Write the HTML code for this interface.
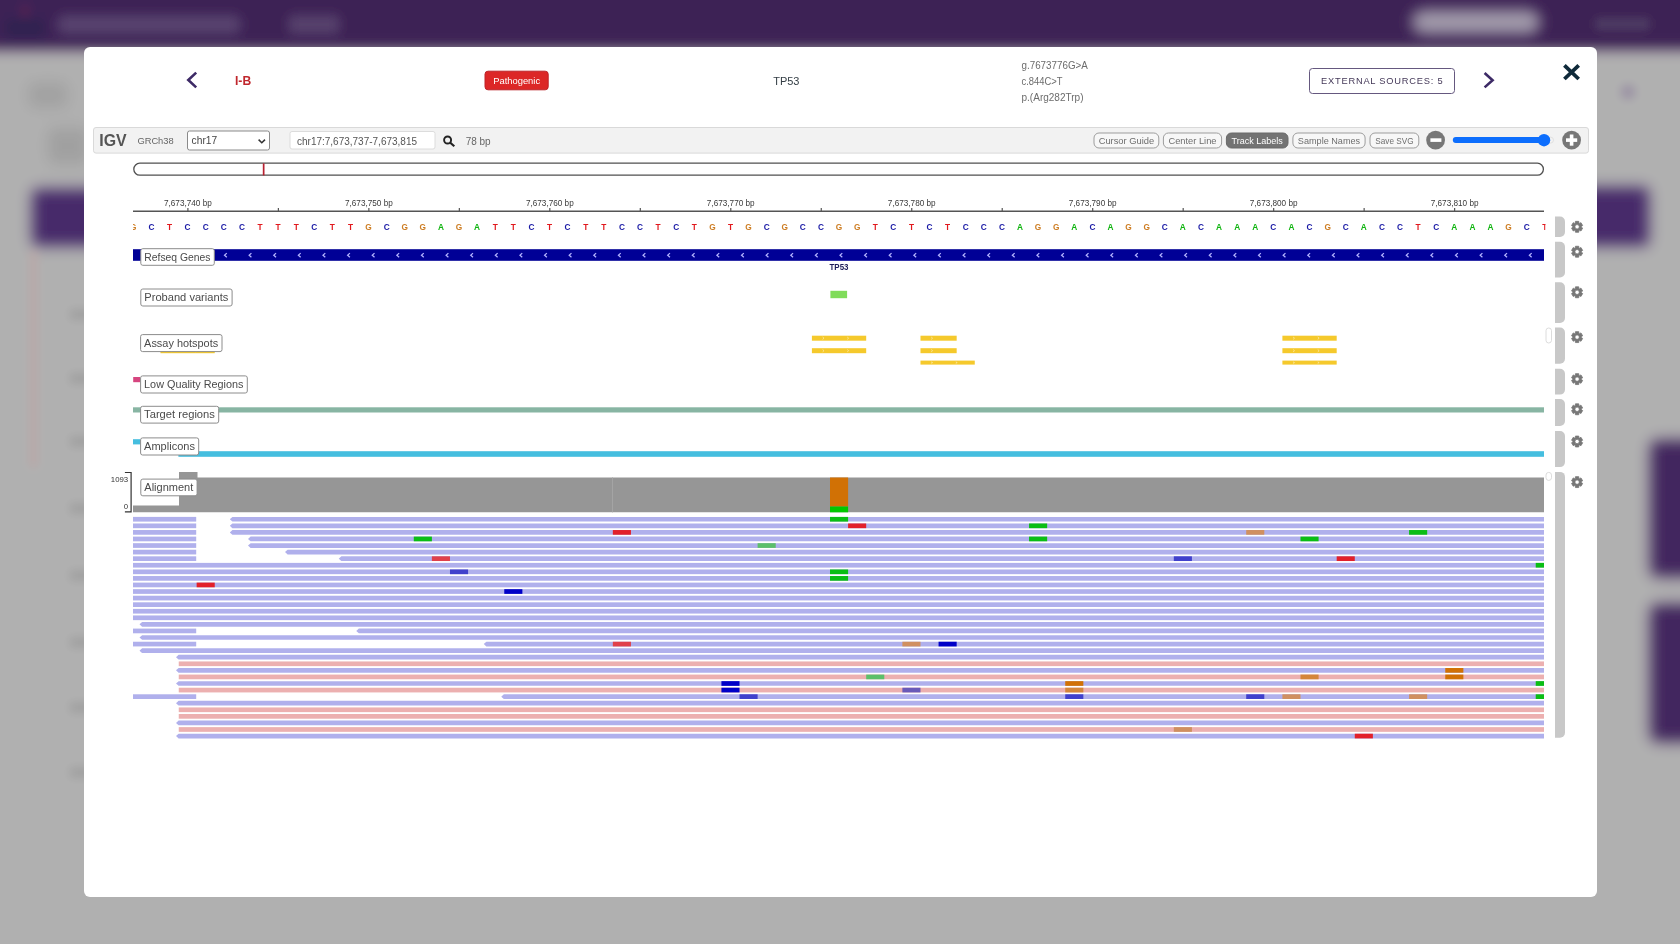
<!DOCTYPE html><html><head><meta charset="utf-8"><style>html,body{margin:0;padding:0;width:1680px;height:944px;overflow:hidden;background:#b0b0b0}svg{position:absolute;left:0;top:0}text{font-family:"Liberation Sans",sans-serif}</style></head><body>
<svg width="1680" height="944" viewBox="0 0 1680 944">
<defs><filter id="bl" x="-10%" y="-10%" width="120%" height="120%"><feGaussianBlur stdDeviation="4"/></filter><filter id="bl2" x="-50%" y="-50%" width="200%" height="200%"><feGaussianBlur stdDeviation="6"/></filter><filter id="bl3" x="-5%" y="-50%" width="110%" height="200%"><feGaussianBlur stdDeviation="5"/></filter><clipPath id="cv"><rect x="133" y="150" width="1411" height="600"/></clipPath><clipPath id="cs"><rect x="133" y="150" width="1412.5" height="600"/></clipPath><g id="gear"><path d="M-1.80,-3.69L-1.67,-5.45L1.67,-5.45L1.80,-3.69L2.29,-3.40L3.89,-4.17L5.55,-1.28L4.09,-0.29L4.09,0.29L5.55,1.28L3.89,4.17L2.29,3.40L1.80,3.69L1.67,5.45L-1.67,5.45L-1.80,3.69L-2.29,3.40L-3.89,4.17L-5.55,1.28L-4.09,0.29L-4.09,-0.29L-5.55,-1.28L-3.89,-4.17L-2.29,-3.40ZM2.20,0A2.2,2.2 0 1 0 -2.20,0A2.2,2.2 0 1 0 2.20,0Z" fill="#777" stroke="#777" stroke-width="0.8" stroke-linejoin="round" fill-rule="evenodd"/></g></defs>
<g filter="url(#bl)">
<rect x="-20" y="45" width="1720" height="920" fill="#b0b0b0"/>
<rect x="-40" y="-40" width="1760" height="90" fill="#3e2155" filter="url(#bl3)"/>
<rect x="58" y="16" width="182" height="17" rx="4" fill="#5c4672" filter="url(#bl3)"/>
<rect x="288" y="16" width="52" height="17" rx="4" fill="#5a446f" filter="url(#bl3)"/>
<rect x="5" y="20" width="40" height="16" fill="#2f2450" filter="url(#bl3)"/>
<circle cx="25" cy="11" r="5" fill="#6a2a50" filter="url(#bl3)"/>
<rect x="1412" y="10" width="128" height="24" rx="12" fill="#a29bab" filter="url(#bl2)"/>
<rect x="1595" y="18" width="55" height="12" rx="4" fill="#4e3a63"/>
<rect x="32" y="189" width="80" height="57" rx="6" fill="#46296a" filter="url(#bl2)"/>
<rect x="29" y="250" width="9" height="218" rx="4" fill="#b8a9a9"/>
<rect x="28" y="82" width="40" height="26" rx="8" fill="#a2a2a2" filter="url(#bl2)"/>
<rect x="48" y="128" width="40" height="36" rx="8" fill="#a0a0a0" filter="url(#bl2)"/>
<rect x="70" y="309" width="24" height="11" fill="#a1a1a1"/>
<rect x="70" y="373" width="24" height="11" fill="#a1a1a1"/>
<rect x="70" y="436" width="24" height="11" fill="#a1a1a1"/>
<rect x="70" y="503" width="24" height="11" fill="#a1a1a1"/>
<rect x="70" y="570" width="24" height="11" fill="#a1a1a1"/>
<rect x="70" y="637" width="24" height="11" fill="#a1a1a1"/>
<rect x="70" y="702" width="24" height="11" fill="#a1a1a1"/>
<rect x="70" y="767" width="24" height="11" fill="#a1a1a1"/>
<rect x="1570" y="187" width="79" height="59" rx="6" fill="#46296a" filter="url(#bl2)"/>
<rect x="1650" y="440" width="60" height="137" rx="8" fill="#43275e" filter="url(#bl2)"/>
<rect x="1650" y="604" width="60" height="138" rx="8" fill="#43275e" filter="url(#bl2)"/>
<circle cx="1628" cy="92" r="8" fill="#9e96a6"/>
</g>
<rect x="84" y="47" width="1513" height="850" rx="6" fill="#fff"/>
<polyline points="196.2,72.6 188.3,80 196.2,87.4" fill="none" stroke="#3d2a66" stroke-width="2.6"/>
<text x="235" y="85" font-size="12.4" font-weight="bold" fill="#c0272d" textLength="16.2" lengthAdjust="spacingAndGlyphs">I-B</text>
<rect x="485" y="71.2" width="63.2" height="18.6" rx="3" fill="#dc2727" stroke="#bd2329" stroke-width="1"/>
<text x="493.2" y="84" font-size="9.4" fill="#fff">Pathogenic</text>
<text x="773.2" y="85" font-size="11.8" fill="#333d44" textLength="26.3" lengthAdjust="spacingAndGlyphs">TP53</text>
<text x="1021.5" y="68.8" font-size="10.5" fill="#6c6c6c" textLength="66.3" lengthAdjust="spacingAndGlyphs">g.7673776G&gt;A</text>
<text x="1021.5" y="84.5" font-size="10.5" fill="#6c6c6c" textLength="41" lengthAdjust="spacingAndGlyphs">c.844C&gt;T</text>
<text x="1021.5" y="101" font-size="10.5" fill="#6c6c6c" textLength="62" lengthAdjust="spacingAndGlyphs">p.(Arg282Trp)</text>
<rect x="1309.5" y="68.5" width="145" height="25" rx="3" fill="#fff" stroke="#65587f" stroke-width="1"/>
<text x="1321" y="84.4" font-size="9.3" letter-spacing="0.78" fill="#443858">EXTERNAL SOURCES: 5</text>
<polyline points="1484.6,73 1492.6,80.2 1484.6,87.4" fill="none" stroke="#3d2a66" stroke-width="2.6"/>
<path d="M1564.4,65.3L1578.7,79M1578.7,65.3L1564.4,79" stroke="#0f2a3a" stroke-width="3.8"/>
<rect x="93.5" y="127.5" width="1495" height="25.6" rx="2.5" fill="#f2f2f2" stroke="#d9d9d9" stroke-width="1"/>
<text x="99.3" y="146.4" font-size="15.9" font-weight="bold" fill="#555">IGV</text>
<text x="137.4" y="144.4" font-size="9.9" fill="#666" textLength="36.3" lengthAdjust="spacingAndGlyphs">GRCh38</text>
<rect x="187.5" y="131" width="82" height="19" rx="2" fill="#fff" stroke="#8a8a8a" stroke-width="1"/>
<text x="191.6" y="144.4" font-size="10.3" fill="#444" textLength="25.6" lengthAdjust="spacingAndGlyphs">chr17</text>
<polyline points="258.6,139.6 261.8,142.8 265,139.6" fill="none" stroke="#333" stroke-width="1.5"/>
<rect x="290" y="131.5" width="145" height="17.5" rx="2" fill="#fff" stroke="#dcdcdc" stroke-width="1"/>
<text x="297" y="145.1" font-size="10.4" fill="#555" textLength="120" lengthAdjust="spacingAndGlyphs">chr17:7,673,737-7,673,815</text>
<circle cx="447.6" cy="140" r="3.5" fill="none" stroke="#222" stroke-width="1.9"/>
<line x1="450.3" y1="142.7" x2="454.3" y2="146.3" stroke="#222" stroke-width="2.2"/>
<text x="465.7" y="145.1" font-size="10.4" fill="#666" textLength="25" lengthAdjust="spacingAndGlyphs">78 bp</text>
<rect x="1094.0" y="133" width="64.8" height="15" rx="5" fill="#f7f7f7" stroke="#9d9d9d" stroke-width="1"/>
<text x="1126.4" y="143.7" font-size="9.33" fill="#6e6e6e" text-anchor="middle" textLength="55.5" lengthAdjust="spacingAndGlyphs">Cursor Guide</text>
<rect x="1163.4" y="133" width="58.2" height="15" rx="5" fill="#f7f7f7" stroke="#9d9d9d" stroke-width="1"/>
<text x="1192.5" y="143.7" font-size="9.29" fill="#6e6e6e" text-anchor="middle" textLength="48" lengthAdjust="spacingAndGlyphs">Center Line</text>
<rect x="1226.4" y="133" width="61.6" height="15" rx="5" fill="#737373" stroke="#6a6a6a" stroke-width="1"/>
<text x="1257.2" y="143.7" font-size="9.04" fill="#fff" text-anchor="middle" textLength="51.4" lengthAdjust="spacingAndGlyphs">Track Labels</text>
<rect x="1292.9" y="133" width="72.2" height="15" rx="5" fill="#f7f7f7" stroke="#9d9d9d" stroke-width="1"/>
<text x="1329.0" y="143.7" font-size="9.11" fill="#6e6e6e" text-anchor="middle" textLength="62.3" lengthAdjust="spacingAndGlyphs">Sample Names</text>
<rect x="1370.0" y="133" width="48.8" height="15" rx="5" fill="#f7f7f7" stroke="#9d9d9d" stroke-width="1"/>
<text x="1394.4" y="143.7" font-size="8.18" fill="#6e6e6e" text-anchor="middle" textLength="38.2" lengthAdjust="spacingAndGlyphs">Save SVG</text>
<circle cx="1435.6" cy="140.1" r="9.4" fill="#777"/>
<rect x="1430.4" y="138.3" width="11" height="3.6" fill="#fff"/>
<rect x="1452.8" y="137.1" width="95" height="6" rx="3" fill="#0d6efd"/>
<circle cx="1550.5" cy="140.1" r="3" fill="none" stroke="#ddd" stroke-width="0.8"/>
<circle cx="1544" cy="140.2" r="6.2" fill="#0d6efd"/>
<circle cx="1571.6" cy="140.1" r="9.4" fill="#777"/>
<rect x="1566" y="138.3" width="11.2" height="3.6" fill="#fff"/>
<rect x="1569.8" y="134.5" width="3.6" height="11.2" fill="#fff"/>
<rect x="133.8" y="163.2" width="1409.6" height="12" rx="6" fill="#fff" stroke="#505050" stroke-width="1.3"/>
<rect x="262.8" y="163.4" width="1.7" height="12" fill="#b82030"/>
<rect x="133" y="210.5" width="1411" height="1.5" fill="#555"/>
<rect x="187.30" y="208" width="1.2" height="3" fill="#555"/>
<text x="187.90" y="206" font-size="8.2" fill="#3a3a3a" text-anchor="middle">7,673,740 bp</text>
<rect x="277.78" y="208" width="1.2" height="3" fill="#555"/>
<rect x="368.26" y="208" width="1.2" height="3" fill="#555"/>
<text x="368.86" y="206" font-size="8.2" fill="#3a3a3a" text-anchor="middle">7,673,750 bp</text>
<rect x="458.74" y="208" width="1.2" height="3" fill="#555"/>
<rect x="549.22" y="208" width="1.2" height="3" fill="#555"/>
<text x="549.82" y="206" font-size="8.2" fill="#3a3a3a" text-anchor="middle">7,673,760 bp</text>
<rect x="639.70" y="208" width="1.2" height="3" fill="#555"/>
<rect x="730.18" y="208" width="1.2" height="3" fill="#555"/>
<text x="730.78" y="206" font-size="8.2" fill="#3a3a3a" text-anchor="middle">7,673,770 bp</text>
<rect x="820.66" y="208" width="1.2" height="3" fill="#555"/>
<rect x="911.14" y="208" width="1.2" height="3" fill="#555"/>
<text x="911.74" y="206" font-size="8.2" fill="#3a3a3a" text-anchor="middle">7,673,780 bp</text>
<rect x="1001.62" y="208" width="1.2" height="3" fill="#555"/>
<rect x="1092.10" y="208" width="1.2" height="3" fill="#555"/>
<text x="1092.70" y="206" font-size="8.2" fill="#3a3a3a" text-anchor="middle">7,673,790 bp</text>
<rect x="1182.58" y="208" width="1.2" height="3" fill="#555"/>
<rect x="1273.06" y="208" width="1.2" height="3" fill="#555"/>
<text x="1273.66" y="206" font-size="8.2" fill="#3a3a3a" text-anchor="middle">7,673,800 bp</text>
<rect x="1363.54" y="208" width="1.2" height="3" fill="#555"/>
<rect x="1454.02" y="208" width="1.2" height="3" fill="#555"/>
<text x="1454.62" y="206" font-size="8.2" fill="#3a3a3a" text-anchor="middle">7,673,810 bp</text>
<g clip-path="url(#cs)">
<text transform="translate(133.30,229.8) scale(0.84,1)" font-size="9.9" font-weight="bold" fill="rgb(205,125,35)" text-anchor="middle">G</text>
<text transform="translate(151.40,229.8) scale(0.84,1)" font-size="9.9" font-weight="bold" fill="rgb(25,25,165)" text-anchor="middle">C</text>
<text transform="translate(169.49,229.8) scale(0.84,1)" font-size="9.9" font-weight="bold" fill="rgb(225,25,30)" text-anchor="middle">T</text>
<text transform="translate(187.59,229.8) scale(0.84,1)" font-size="9.9" font-weight="bold" fill="rgb(25,25,165)" text-anchor="middle">C</text>
<text transform="translate(205.68,229.8) scale(0.84,1)" font-size="9.9" font-weight="bold" fill="rgb(25,25,165)" text-anchor="middle">C</text>
<text transform="translate(223.78,229.8) scale(0.84,1)" font-size="9.9" font-weight="bold" fill="rgb(25,25,165)" text-anchor="middle">C</text>
<text transform="translate(241.88,229.8) scale(0.84,1)" font-size="9.9" font-weight="bold" fill="rgb(25,25,165)" text-anchor="middle">C</text>
<text transform="translate(259.97,229.8) scale(0.84,1)" font-size="9.9" font-weight="bold" fill="rgb(225,25,30)" text-anchor="middle">T</text>
<text transform="translate(278.07,229.8) scale(0.84,1)" font-size="9.9" font-weight="bold" fill="rgb(225,25,30)" text-anchor="middle">T</text>
<text transform="translate(296.16,229.8) scale(0.84,1)" font-size="9.9" font-weight="bold" fill="rgb(225,25,30)" text-anchor="middle">T</text>
<text transform="translate(314.26,229.8) scale(0.84,1)" font-size="9.9" font-weight="bold" fill="rgb(25,25,165)" text-anchor="middle">C</text>
<text transform="translate(332.36,229.8) scale(0.84,1)" font-size="9.9" font-weight="bold" fill="rgb(225,25,30)" text-anchor="middle">T</text>
<text transform="translate(350.45,229.8) scale(0.84,1)" font-size="9.9" font-weight="bold" fill="rgb(225,25,30)" text-anchor="middle">T</text>
<text transform="translate(368.55,229.8) scale(0.84,1)" font-size="9.9" font-weight="bold" fill="rgb(205,125,35)" text-anchor="middle">G</text>
<text transform="translate(386.64,229.8) scale(0.84,1)" font-size="9.9" font-weight="bold" fill="rgb(25,25,165)" text-anchor="middle">C</text>
<text transform="translate(404.74,229.8) scale(0.84,1)" font-size="9.9" font-weight="bold" fill="rgb(205,125,35)" text-anchor="middle">G</text>
<text transform="translate(422.84,229.8) scale(0.84,1)" font-size="9.9" font-weight="bold" fill="rgb(205,125,35)" text-anchor="middle">G</text>
<text transform="translate(440.93,229.8) scale(0.84,1)" font-size="9.9" font-weight="bold" fill="rgb(15,180,15)" text-anchor="middle">A</text>
<text transform="translate(459.03,229.8) scale(0.84,1)" font-size="9.9" font-weight="bold" fill="rgb(205,125,35)" text-anchor="middle">G</text>
<text transform="translate(477.12,229.8) scale(0.84,1)" font-size="9.9" font-weight="bold" fill="rgb(15,180,15)" text-anchor="middle">A</text>
<text transform="translate(495.22,229.8) scale(0.84,1)" font-size="9.9" font-weight="bold" fill="rgb(225,25,30)" text-anchor="middle">T</text>
<text transform="translate(513.32,229.8) scale(0.84,1)" font-size="9.9" font-weight="bold" fill="rgb(225,25,30)" text-anchor="middle">T</text>
<text transform="translate(531.41,229.8) scale(0.84,1)" font-size="9.9" font-weight="bold" fill="rgb(25,25,165)" text-anchor="middle">C</text>
<text transform="translate(549.51,229.8) scale(0.84,1)" font-size="9.9" font-weight="bold" fill="rgb(225,25,30)" text-anchor="middle">T</text>
<text transform="translate(567.60,229.8) scale(0.84,1)" font-size="9.9" font-weight="bold" fill="rgb(25,25,165)" text-anchor="middle">C</text>
<text transform="translate(585.70,229.8) scale(0.84,1)" font-size="9.9" font-weight="bold" fill="rgb(225,25,30)" text-anchor="middle">T</text>
<text transform="translate(603.80,229.8) scale(0.84,1)" font-size="9.9" font-weight="bold" fill="rgb(225,25,30)" text-anchor="middle">T</text>
<text transform="translate(621.89,229.8) scale(0.84,1)" font-size="9.9" font-weight="bold" fill="rgb(25,25,165)" text-anchor="middle">C</text>
<text transform="translate(639.99,229.8) scale(0.84,1)" font-size="9.9" font-weight="bold" fill="rgb(25,25,165)" text-anchor="middle">C</text>
<text transform="translate(658.08,229.8) scale(0.84,1)" font-size="9.9" font-weight="bold" fill="rgb(225,25,30)" text-anchor="middle">T</text>
<text transform="translate(676.18,229.8) scale(0.84,1)" font-size="9.9" font-weight="bold" fill="rgb(25,25,165)" text-anchor="middle">C</text>
<text transform="translate(694.28,229.8) scale(0.84,1)" font-size="9.9" font-weight="bold" fill="rgb(225,25,30)" text-anchor="middle">T</text>
<text transform="translate(712.37,229.8) scale(0.84,1)" font-size="9.9" font-weight="bold" fill="rgb(205,125,35)" text-anchor="middle">G</text>
<text transform="translate(730.47,229.8) scale(0.84,1)" font-size="9.9" font-weight="bold" fill="rgb(225,25,30)" text-anchor="middle">T</text>
<text transform="translate(748.56,229.8) scale(0.84,1)" font-size="9.9" font-weight="bold" fill="rgb(205,125,35)" text-anchor="middle">G</text>
<text transform="translate(766.66,229.8) scale(0.84,1)" font-size="9.9" font-weight="bold" fill="rgb(25,25,165)" text-anchor="middle">C</text>
<text transform="translate(784.76,229.8) scale(0.84,1)" font-size="9.9" font-weight="bold" fill="rgb(205,125,35)" text-anchor="middle">G</text>
<text transform="translate(802.85,229.8) scale(0.84,1)" font-size="9.9" font-weight="bold" fill="rgb(25,25,165)" text-anchor="middle">C</text>
<text transform="translate(820.95,229.8) scale(0.84,1)" font-size="9.9" font-weight="bold" fill="rgb(25,25,165)" text-anchor="middle">C</text>
<text transform="translate(839.04,229.8) scale(0.84,1)" font-size="9.9" font-weight="bold" fill="rgb(205,125,35)" text-anchor="middle">G</text>
<text transform="translate(857.14,229.8) scale(0.84,1)" font-size="9.9" font-weight="bold" fill="rgb(205,125,35)" text-anchor="middle">G</text>
<text transform="translate(875.24,229.8) scale(0.84,1)" font-size="9.9" font-weight="bold" fill="rgb(225,25,30)" text-anchor="middle">T</text>
<text transform="translate(893.33,229.8) scale(0.84,1)" font-size="9.9" font-weight="bold" fill="rgb(25,25,165)" text-anchor="middle">C</text>
<text transform="translate(911.43,229.8) scale(0.84,1)" font-size="9.9" font-weight="bold" fill="rgb(225,25,30)" text-anchor="middle">T</text>
<text transform="translate(929.52,229.8) scale(0.84,1)" font-size="9.9" font-weight="bold" fill="rgb(25,25,165)" text-anchor="middle">C</text>
<text transform="translate(947.62,229.8) scale(0.84,1)" font-size="9.9" font-weight="bold" fill="rgb(225,25,30)" text-anchor="middle">T</text>
<text transform="translate(965.72,229.8) scale(0.84,1)" font-size="9.9" font-weight="bold" fill="rgb(25,25,165)" text-anchor="middle">C</text>
<text transform="translate(983.81,229.8) scale(0.84,1)" font-size="9.9" font-weight="bold" fill="rgb(25,25,165)" text-anchor="middle">C</text>
<text transform="translate(1001.91,229.8) scale(0.84,1)" font-size="9.9" font-weight="bold" fill="rgb(25,25,165)" text-anchor="middle">C</text>
<text transform="translate(1020.00,229.8) scale(0.84,1)" font-size="9.9" font-weight="bold" fill="rgb(15,180,15)" text-anchor="middle">A</text>
<text transform="translate(1038.10,229.8) scale(0.84,1)" font-size="9.9" font-weight="bold" fill="rgb(205,125,35)" text-anchor="middle">G</text>
<text transform="translate(1056.20,229.8) scale(0.84,1)" font-size="9.9" font-weight="bold" fill="rgb(205,125,35)" text-anchor="middle">G</text>
<text transform="translate(1074.29,229.8) scale(0.84,1)" font-size="9.9" font-weight="bold" fill="rgb(15,180,15)" text-anchor="middle">A</text>
<text transform="translate(1092.39,229.8) scale(0.84,1)" font-size="9.9" font-weight="bold" fill="rgb(25,25,165)" text-anchor="middle">C</text>
<text transform="translate(1110.48,229.8) scale(0.84,1)" font-size="9.9" font-weight="bold" fill="rgb(15,180,15)" text-anchor="middle">A</text>
<text transform="translate(1128.58,229.8) scale(0.84,1)" font-size="9.9" font-weight="bold" fill="rgb(205,125,35)" text-anchor="middle">G</text>
<text transform="translate(1146.68,229.8) scale(0.84,1)" font-size="9.9" font-weight="bold" fill="rgb(205,125,35)" text-anchor="middle">G</text>
<text transform="translate(1164.77,229.8) scale(0.84,1)" font-size="9.9" font-weight="bold" fill="rgb(25,25,165)" text-anchor="middle">C</text>
<text transform="translate(1182.87,229.8) scale(0.84,1)" font-size="9.9" font-weight="bold" fill="rgb(15,180,15)" text-anchor="middle">A</text>
<text transform="translate(1200.96,229.8) scale(0.84,1)" font-size="9.9" font-weight="bold" fill="rgb(25,25,165)" text-anchor="middle">C</text>
<text transform="translate(1219.06,229.8) scale(0.84,1)" font-size="9.9" font-weight="bold" fill="rgb(15,180,15)" text-anchor="middle">A</text>
<text transform="translate(1237.16,229.8) scale(0.84,1)" font-size="9.9" font-weight="bold" fill="rgb(15,180,15)" text-anchor="middle">A</text>
<text transform="translate(1255.25,229.8) scale(0.84,1)" font-size="9.9" font-weight="bold" fill="rgb(15,180,15)" text-anchor="middle">A</text>
<text transform="translate(1273.35,229.8) scale(0.84,1)" font-size="9.9" font-weight="bold" fill="rgb(25,25,165)" text-anchor="middle">C</text>
<text transform="translate(1291.44,229.8) scale(0.84,1)" font-size="9.9" font-weight="bold" fill="rgb(15,180,15)" text-anchor="middle">A</text>
<text transform="translate(1309.54,229.8) scale(0.84,1)" font-size="9.9" font-weight="bold" fill="rgb(25,25,165)" text-anchor="middle">C</text>
<text transform="translate(1327.64,229.8) scale(0.84,1)" font-size="9.9" font-weight="bold" fill="rgb(205,125,35)" text-anchor="middle">G</text>
<text transform="translate(1345.73,229.8) scale(0.84,1)" font-size="9.9" font-weight="bold" fill="rgb(25,25,165)" text-anchor="middle">C</text>
<text transform="translate(1363.83,229.8) scale(0.84,1)" font-size="9.9" font-weight="bold" fill="rgb(15,180,15)" text-anchor="middle">A</text>
<text transform="translate(1381.92,229.8) scale(0.84,1)" font-size="9.9" font-weight="bold" fill="rgb(25,25,165)" text-anchor="middle">C</text>
<text transform="translate(1400.02,229.8) scale(0.84,1)" font-size="9.9" font-weight="bold" fill="rgb(25,25,165)" text-anchor="middle">C</text>
<text transform="translate(1418.12,229.8) scale(0.84,1)" font-size="9.9" font-weight="bold" fill="rgb(225,25,30)" text-anchor="middle">T</text>
<text transform="translate(1436.21,229.8) scale(0.84,1)" font-size="9.9" font-weight="bold" fill="rgb(25,25,165)" text-anchor="middle">C</text>
<text transform="translate(1454.31,229.8) scale(0.84,1)" font-size="9.9" font-weight="bold" fill="rgb(15,180,15)" text-anchor="middle">A</text>
<text transform="translate(1472.40,229.8) scale(0.84,1)" font-size="9.9" font-weight="bold" fill="rgb(15,180,15)" text-anchor="middle">A</text>
<text transform="translate(1490.50,229.8) scale(0.84,1)" font-size="9.9" font-weight="bold" fill="rgb(15,180,15)" text-anchor="middle">A</text>
<text transform="translate(1508.60,229.8) scale(0.84,1)" font-size="9.9" font-weight="bold" fill="rgb(205,125,35)" text-anchor="middle">G</text>
<text transform="translate(1526.69,229.8) scale(0.84,1)" font-size="9.9" font-weight="bold" fill="rgb(25,25,165)" text-anchor="middle">C</text>
<text transform="translate(1544.79,229.8) scale(0.84,1)" font-size="9.9" font-weight="bold" fill="rgb(225,25,30)" text-anchor="middle">T</text>
</g>
<rect x="133" y="249.2" width="1411" height="11.6" fill="rgb(0,0,150)"/>
<polyline points="226.80,253.1 224.50,255.2 226.80,257.3" fill="none" stroke="#b4b4ff" stroke-width="1.25"/>
<polyline points="251.42,253.1 249.12,255.2 251.42,257.3" fill="none" stroke="#b4b4ff" stroke-width="1.25"/>
<polyline points="276.04,253.1 273.74,255.2 276.04,257.3" fill="none" stroke="#b4b4ff" stroke-width="1.25"/>
<polyline points="300.66,253.1 298.36,255.2 300.66,257.3" fill="none" stroke="#b4b4ff" stroke-width="1.25"/>
<polyline points="325.28,253.1 322.98,255.2 325.28,257.3" fill="none" stroke="#b4b4ff" stroke-width="1.25"/>
<polyline points="349.90,253.1 347.60,255.2 349.90,257.3" fill="none" stroke="#b4b4ff" stroke-width="1.25"/>
<polyline points="374.52,253.1 372.22,255.2 374.52,257.3" fill="none" stroke="#b4b4ff" stroke-width="1.25"/>
<polyline points="399.14,253.1 396.84,255.2 399.14,257.3" fill="none" stroke="#b4b4ff" stroke-width="1.25"/>
<polyline points="423.76,253.1 421.46,255.2 423.76,257.3" fill="none" stroke="#b4b4ff" stroke-width="1.25"/>
<polyline points="448.38,253.1 446.08,255.2 448.38,257.3" fill="none" stroke="#b4b4ff" stroke-width="1.25"/>
<polyline points="473.00,253.1 470.70,255.2 473.00,257.3" fill="none" stroke="#b4b4ff" stroke-width="1.25"/>
<polyline points="497.62,253.1 495.32,255.2 497.62,257.3" fill="none" stroke="#b4b4ff" stroke-width="1.25"/>
<polyline points="522.24,253.1 519.94,255.2 522.24,257.3" fill="none" stroke="#b4b4ff" stroke-width="1.25"/>
<polyline points="546.86,253.1 544.56,255.2 546.86,257.3" fill="none" stroke="#b4b4ff" stroke-width="1.25"/>
<polyline points="571.48,253.1 569.18,255.2 571.48,257.3" fill="none" stroke="#b4b4ff" stroke-width="1.25"/>
<polyline points="596.10,253.1 593.80,255.2 596.10,257.3" fill="none" stroke="#b4b4ff" stroke-width="1.25"/>
<polyline points="620.72,253.1 618.42,255.2 620.72,257.3" fill="none" stroke="#b4b4ff" stroke-width="1.25"/>
<polyline points="645.34,253.1 643.04,255.2 645.34,257.3" fill="none" stroke="#b4b4ff" stroke-width="1.25"/>
<polyline points="669.96,253.1 667.66,255.2 669.96,257.3" fill="none" stroke="#b4b4ff" stroke-width="1.25"/>
<polyline points="694.58,253.1 692.28,255.2 694.58,257.3" fill="none" stroke="#b4b4ff" stroke-width="1.25"/>
<polyline points="719.20,253.1 716.90,255.2 719.20,257.3" fill="none" stroke="#b4b4ff" stroke-width="1.25"/>
<polyline points="743.82,253.1 741.52,255.2 743.82,257.3" fill="none" stroke="#b4b4ff" stroke-width="1.25"/>
<polyline points="768.44,253.1 766.14,255.2 768.44,257.3" fill="none" stroke="#b4b4ff" stroke-width="1.25"/>
<polyline points="793.06,253.1 790.76,255.2 793.06,257.3" fill="none" stroke="#b4b4ff" stroke-width="1.25"/>
<polyline points="817.68,253.1 815.38,255.2 817.68,257.3" fill="none" stroke="#b4b4ff" stroke-width="1.25"/>
<polyline points="842.30,253.1 840.00,255.2 842.30,257.3" fill="none" stroke="#b4b4ff" stroke-width="1.25"/>
<polyline points="866.92,253.1 864.62,255.2 866.92,257.3" fill="none" stroke="#b4b4ff" stroke-width="1.25"/>
<polyline points="891.54,253.1 889.24,255.2 891.54,257.3" fill="none" stroke="#b4b4ff" stroke-width="1.25"/>
<polyline points="916.16,253.1 913.86,255.2 916.16,257.3" fill="none" stroke="#b4b4ff" stroke-width="1.25"/>
<polyline points="940.78,253.1 938.48,255.2 940.78,257.3" fill="none" stroke="#b4b4ff" stroke-width="1.25"/>
<polyline points="965.40,253.1 963.10,255.2 965.40,257.3" fill="none" stroke="#b4b4ff" stroke-width="1.25"/>
<polyline points="990.02,253.1 987.72,255.2 990.02,257.3" fill="none" stroke="#b4b4ff" stroke-width="1.25"/>
<polyline points="1014.64,253.1 1012.34,255.2 1014.64,257.3" fill="none" stroke="#b4b4ff" stroke-width="1.25"/>
<polyline points="1039.26,253.1 1036.96,255.2 1039.26,257.3" fill="none" stroke="#b4b4ff" stroke-width="1.25"/>
<polyline points="1063.88,253.1 1061.58,255.2 1063.88,257.3" fill="none" stroke="#b4b4ff" stroke-width="1.25"/>
<polyline points="1088.50,253.1 1086.20,255.2 1088.50,257.3" fill="none" stroke="#b4b4ff" stroke-width="1.25"/>
<polyline points="1113.12,253.1 1110.82,255.2 1113.12,257.3" fill="none" stroke="#b4b4ff" stroke-width="1.25"/>
<polyline points="1137.74,253.1 1135.44,255.2 1137.74,257.3" fill="none" stroke="#b4b4ff" stroke-width="1.25"/>
<polyline points="1162.36,253.1 1160.06,255.2 1162.36,257.3" fill="none" stroke="#b4b4ff" stroke-width="1.25"/>
<polyline points="1186.98,253.1 1184.68,255.2 1186.98,257.3" fill="none" stroke="#b4b4ff" stroke-width="1.25"/>
<polyline points="1211.60,253.1 1209.30,255.2 1211.60,257.3" fill="none" stroke="#b4b4ff" stroke-width="1.25"/>
<polyline points="1236.22,253.1 1233.92,255.2 1236.22,257.3" fill="none" stroke="#b4b4ff" stroke-width="1.25"/>
<polyline points="1260.84,253.1 1258.54,255.2 1260.84,257.3" fill="none" stroke="#b4b4ff" stroke-width="1.25"/>
<polyline points="1285.46,253.1 1283.16,255.2 1285.46,257.3" fill="none" stroke="#b4b4ff" stroke-width="1.25"/>
<polyline points="1310.08,253.1 1307.78,255.2 1310.08,257.3" fill="none" stroke="#b4b4ff" stroke-width="1.25"/>
<polyline points="1334.70,253.1 1332.40,255.2 1334.70,257.3" fill="none" stroke="#b4b4ff" stroke-width="1.25"/>
<polyline points="1359.32,253.1 1357.02,255.2 1359.32,257.3" fill="none" stroke="#b4b4ff" stroke-width="1.25"/>
<polyline points="1383.94,253.1 1381.64,255.2 1383.94,257.3" fill="none" stroke="#b4b4ff" stroke-width="1.25"/>
<polyline points="1408.56,253.1 1406.26,255.2 1408.56,257.3" fill="none" stroke="#b4b4ff" stroke-width="1.25"/>
<polyline points="1433.18,253.1 1430.88,255.2 1433.18,257.3" fill="none" stroke="#b4b4ff" stroke-width="1.25"/>
<polyline points="1457.80,253.1 1455.50,255.2 1457.80,257.3" fill="none" stroke="#b4b4ff" stroke-width="1.25"/>
<polyline points="1482.42,253.1 1480.12,255.2 1482.42,257.3" fill="none" stroke="#b4b4ff" stroke-width="1.25"/>
<polyline points="1507.04,253.1 1504.74,255.2 1507.04,257.3" fill="none" stroke="#b4b4ff" stroke-width="1.25"/>
<polyline points="1531.66,253.1 1529.36,255.2 1531.66,257.3" fill="none" stroke="#b4b4ff" stroke-width="1.25"/>
<text x="839" y="270.3" font-size="8.9" font-weight="bold" fill="#1e1e58" text-anchor="middle" textLength="19" lengthAdjust="spacingAndGlyphs">TP53</text>
<rect x="830.4" y="290.8" width="16.7" height="7.4" fill="#80dc5a"/>
<rect x="160.44" y="335.7" width="54.29" height="5" fill="#f5c92c"/>
<polyline points="171.14,337.0 172.54,338.20 171.14,339.40" fill="none" stroke="#fbe59a" stroke-width="0.9"/>
<polyline points="195.76,337.0 197.16,338.20 195.76,339.40" fill="none" stroke="#fbe59a" stroke-width="0.9"/>
<rect x="160.44" y="348.2" width="54.29" height="5" fill="#f5c92c"/>
<polyline points="171.14,349.5 172.54,350.70 171.14,351.90" fill="none" stroke="#fbe59a" stroke-width="0.9"/>
<polyline points="195.76,349.5 197.16,350.70 195.76,351.90" fill="none" stroke="#fbe59a" stroke-width="0.9"/>
<rect x="811.90" y="335.7" width="54.29" height="5" fill="#f5c92c"/>
<polyline points="822.60,337.0 824.00,338.20 822.60,339.40" fill="none" stroke="#fbe59a" stroke-width="0.9"/>
<polyline points="847.22,337.0 848.62,338.20 847.22,339.40" fill="none" stroke="#fbe59a" stroke-width="0.9"/>
<rect x="811.90" y="348.2" width="54.29" height="5" fill="#f5c92c"/>
<polyline points="822.60,349.5 824.00,350.70 822.60,351.90" fill="none" stroke="#fbe59a" stroke-width="0.9"/>
<polyline points="847.22,349.5 848.62,350.70 847.22,351.90" fill="none" stroke="#fbe59a" stroke-width="0.9"/>
<rect x="920.48" y="335.7" width="36.19" height="5" fill="#f5c92c"/>
<polyline points="931.18,337.0 932.58,338.20 931.18,339.40" fill="none" stroke="#fbe59a" stroke-width="0.9"/>
<rect x="920.48" y="348.2" width="36.19" height="5" fill="#f5c92c"/>
<polyline points="931.18,349.5 932.58,350.70 931.18,351.90" fill="none" stroke="#fbe59a" stroke-width="0.9"/>
<rect x="920.48" y="360.6" width="54.29" height="4.0" fill="#f5c92c"/>
<polyline points="931.18,361.90000000000003 932.58,362.60 931.18,363.30" fill="none" stroke="#fbe59a" stroke-width="0.9"/>
<polyline points="955.80,361.90000000000003 957.20,362.60 955.80,363.30" fill="none" stroke="#fbe59a" stroke-width="0.9"/>
<rect x="1282.40" y="335.7" width="54.29" height="5" fill="#f5c92c"/>
<polyline points="1293.10,337.0 1294.50,338.20 1293.10,339.40" fill="none" stroke="#fbe59a" stroke-width="0.9"/>
<polyline points="1317.72,337.0 1319.12,338.20 1317.72,339.40" fill="none" stroke="#fbe59a" stroke-width="0.9"/>
<rect x="1282.40" y="348.2" width="54.29" height="5" fill="#f5c92c"/>
<polyline points="1293.10,349.5 1294.50,350.70 1293.10,351.90" fill="none" stroke="#fbe59a" stroke-width="0.9"/>
<polyline points="1317.72,349.5 1319.12,350.70 1317.72,351.90" fill="none" stroke="#fbe59a" stroke-width="0.9"/>
<rect x="1282.40" y="360.6" width="54.29" height="4.0" fill="#f5c92c"/>
<polyline points="1293.10,361.90000000000003 1294.50,362.60 1293.10,363.30" fill="none" stroke="#fbe59a" stroke-width="0.9"/>
<polyline points="1317.72,361.90000000000003 1319.12,362.60 1317.72,363.30" fill="none" stroke="#fbe59a" stroke-width="0.9"/>
<rect x="133.2" y="377" width="7" height="5.2" fill="#d6457f"/>
<rect x="133" y="407.3" width="1411" height="5.2" fill="#88b5a3"/>
<rect x="133" y="439.2" width="7.5" height="5.2" fill="#45bedf"/>
<rect x="178.4" y="451.2" width="1365.6" height="5.6" fill="#45bedf"/>
<path d="M124.9,472.5H131.1V511.8H124.9" fill="none" stroke="#333" stroke-width="1.2"/>
<text x="128.2" y="481.9" font-size="7.8" fill="#333" text-anchor="end">1093</text>
<text x="128.2" y="508.7" font-size="7.8" fill="#333" text-anchor="end">0</text>
<path d="M133,512.3V505.4H179V472H197.5V477.5H1544V512.3Z" fill="rgb(150,150,150)"/>
<rect x="612" y="477.5" width="1" height="34.8" fill="#a4a4a4"/>
<rect x="830.00" y="477.5" width="18.10" height="29" fill="rgb(209,113,5)"/>
<rect x="830.00" y="506.5" width="18.10" height="5.8" fill="rgb(0,200,0)"/>
<rect x="133.00" y="516.90" width="63.20" height="4.7" fill="rgb(176,176,236)"/>
<path d="M229.80,519.25L232.40,516.90H1544.00V521.60H232.40Z" fill="rgb(176,176,236)"/>
<rect x="133.00" y="523.47" width="63.20" height="4.7" fill="rgb(176,176,236)"/>
<path d="M229.80,525.82L232.40,523.47H1544.00V528.17H232.40Z" fill="rgb(176,176,236)"/>
<rect x="133.00" y="530.04" width="63.20" height="4.7" fill="rgb(176,176,236)"/>
<path d="M229.80,532.39L232.40,530.04H1544.00V534.74H232.40Z" fill="rgb(176,176,236)"/>
<rect x="133.00" y="536.61" width="63.20" height="4.7" fill="rgb(176,176,236)"/>
<path d="M248.00,538.96L250.60,536.61H1544.00V541.31H250.60Z" fill="rgb(176,176,236)"/>
<rect x="133.00" y="543.18" width="63.20" height="4.7" fill="rgb(176,176,236)"/>
<path d="M248.00,545.53L250.60,543.18H1544.00V547.88H250.60Z" fill="rgb(176,176,236)"/>
<rect x="133.00" y="549.75" width="63.20" height="4.7" fill="rgb(176,176,236)"/>
<path d="M285.00,552.10L287.60,549.75H1544.00V554.45H287.60Z" fill="rgb(176,176,236)"/>
<rect x="133.00" y="556.32" width="63.20" height="4.7" fill="rgb(176,176,236)"/>
<path d="M338.75,558.67L341.35,556.32H1544.00V561.02H341.35Z" fill="rgb(176,176,236)"/>
<rect x="133.00" y="562.89" width="1411.00" height="4.7" fill="rgb(176,176,236)"/>
<rect x="133.00" y="569.46" width="1411.00" height="4.7" fill="rgb(176,176,236)"/>
<rect x="133.00" y="576.03" width="1411.00" height="4.7" fill="rgb(176,176,236)"/>
<rect x="133.00" y="582.60" width="1411.00" height="4.7" fill="rgb(176,176,236)"/>
<rect x="133.00" y="589.17" width="1411.00" height="4.7" fill="rgb(176,176,236)"/>
<rect x="133.00" y="595.74" width="1411.00" height="4.7" fill="rgb(176,176,236)"/>
<rect x="133.00" y="602.31" width="1411.00" height="4.7" fill="rgb(176,176,236)"/>
<rect x="133.00" y="608.88" width="1411.00" height="4.7" fill="rgb(176,176,236)"/>
<rect x="133.00" y="615.45" width="1411.00" height="4.7" fill="rgb(176,176,236)"/>
<path d="M139.50,624.37L142.10,622.02H1544.00V626.72H142.10Z" fill="rgb(176,176,236)"/>
<path d="M139.50,637.51L142.10,635.16H1544.00V639.86H142.10Z" fill="rgb(176,176,236)"/>
<path d="M139.50,650.65L142.10,648.30H1544.00V653.00H142.10Z" fill="rgb(176,176,236)"/>
<rect x="133.00" y="628.59" width="63.20" height="4.7" fill="rgb(176,176,236)"/>
<path d="M356.25,630.94L358.85,628.59H1544.00V633.29H358.85Z" fill="rgb(176,176,236)"/>
<rect x="133.00" y="641.73" width="63.20" height="4.7" fill="rgb(176,176,236)"/>
<path d="M483.75,644.08L486.35,641.73H1544.00V646.43H486.35Z" fill="rgb(176,176,236)"/>
<path d="M176.00,657.22L178.60,654.87H1544.00V659.57H178.60Z" fill="rgb(176,176,236)"/>
<path d="M176.00,670.36L178.60,668.01H1544.00V672.71H178.60Z" fill="rgb(176,176,236)"/>
<path d="M176.00,683.50L178.60,681.15H1544.00V685.85H178.60Z" fill="rgb(176,176,236)"/>
<path d="M176.00,703.21L178.60,700.86H1544.00V705.56H178.60Z" fill="rgb(176,176,236)"/>
<path d="M176.00,722.92L178.60,720.57H1544.00V725.27H178.60Z" fill="rgb(176,176,236)"/>
<path d="M176.00,736.06L178.60,733.71H1544.00V738.41H178.60Z" fill="rgb(176,176,236)"/>
<rect x="178.75" y="661.44" width="1365.25" height="4.7" fill="rgb(236,176,176)"/>
<rect x="178.75" y="674.58" width="1365.25" height="4.7" fill="rgb(236,176,176)"/>
<rect x="178.75" y="687.72" width="1365.25" height="4.7" fill="rgb(236,176,176)"/>
<rect x="178.75" y="707.43" width="1365.25" height="4.7" fill="rgb(236,176,176)"/>
<rect x="178.75" y="714.00" width="1365.25" height="4.7" fill="rgb(236,176,176)"/>
<rect x="178.75" y="727.14" width="1365.25" height="4.7" fill="rgb(236,176,176)"/>
<rect x="133.00" y="694.29" width="63.20" height="4.7" fill="rgb(176,176,236)"/>
<path d="M501.25,696.64L503.85,694.29H1544.00V698.99H503.85Z" fill="rgb(176,176,236)"/>
<g clip-path="url(#cv)">
<rect x="830.00" y="516.90" width="18.10" height="4.7" fill="rgb(10,190,20)"/>
<rect x="848.09" y="523.47" width="18.10" height="4.7" fill="#e2202a"/>
<rect x="1029.05" y="523.47" width="18.10" height="4.7" fill="rgb(10,190,20)"/>
<rect x="612.84" y="530.04" width="18.10" height="4.7" fill="#e2202a"/>
<rect x="1246.20" y="530.04" width="18.10" height="4.7" fill="#d09060"/>
<rect x="1409.07" y="530.04" width="18.10" height="4.7" fill="rgb(10,190,20)"/>
<rect x="413.79" y="536.61" width="18.10" height="4.7" fill="rgb(10,190,20)"/>
<rect x="1029.05" y="536.61" width="18.10" height="4.7" fill="rgb(10,190,20)"/>
<rect x="1300.49" y="536.61" width="18.10" height="4.7" fill="rgb(10,190,20)"/>
<rect x="757.61" y="543.18" width="18.10" height="4.7" fill="#5cbf6a"/>
<rect x="431.88" y="556.32" width="18.10" height="4.7" fill="#e0404a"/>
<rect x="1173.82" y="556.32" width="18.10" height="4.7" fill="#4040cc"/>
<rect x="1336.68" y="556.32" width="18.10" height="4.7" fill="#e2202a"/>
<rect x="1535.74" y="562.89" width="18.10" height="4.7" fill="rgb(10,190,20)"/>
<rect x="449.98" y="569.46" width="18.10" height="4.7" fill="#4040cc"/>
<rect x="830.00" y="569.46" width="18.10" height="4.7" fill="rgb(10,190,20)"/>
<rect x="830.00" y="576.03" width="18.10" height="4.7" fill="rgb(10,190,20)"/>
<rect x="196.64" y="582.60" width="18.10" height="4.7" fill="#e2202a"/>
<rect x="504.27" y="589.17" width="18.10" height="4.7" fill="rgb(0,0,200)"/>
<rect x="612.84" y="641.73" width="18.10" height="4.7" fill="#e0404a"/>
<rect x="902.38" y="641.73" width="18.10" height="4.7" fill="#d09060"/>
<rect x="938.57" y="641.73" width="18.10" height="4.7" fill="rgb(0,0,200)"/>
<rect x="1445.26" y="668.01" width="18.10" height="4.7" fill="rgb(209,113,5)"/>
<rect x="866.19" y="674.58" width="18.10" height="4.7" fill="#5cbf6a"/>
<rect x="1300.49" y="674.58" width="18.10" height="4.7" fill="#d4863a"/>
<rect x="1445.26" y="674.58" width="18.10" height="4.7" fill="rgb(209,113,5)"/>
<rect x="721.42" y="681.15" width="18.10" height="4.7" fill="rgb(0,0,200)"/>
<rect x="1065.24" y="681.15" width="18.10" height="4.7" fill="rgb(209,113,5)"/>
<rect x="1535.74" y="681.15" width="18.10" height="4.7" fill="rgb(10,190,20)"/>
<rect x="721.42" y="687.72" width="18.10" height="4.7" fill="rgb(0,0,200)"/>
<rect x="902.38" y="687.72" width="18.10" height="4.7" fill="#6a5ab8"/>
<rect x="1065.24" y="687.72" width="18.10" height="4.7" fill="#d4863a"/>
<rect x="739.52" y="694.29" width="18.10" height="4.7" fill="#4040cc"/>
<rect x="1065.24" y="694.29" width="18.10" height="4.7" fill="#4040cc"/>
<rect x="1246.20" y="694.29" width="18.10" height="4.7" fill="#4040cc"/>
<rect x="1282.40" y="694.29" width="18.10" height="4.7" fill="#d09060"/>
<rect x="1409.07" y="694.29" width="18.10" height="4.7" fill="#d09060"/>
<rect x="1535.74" y="694.29" width="18.10" height="4.7" fill="rgb(10,190,20)"/>
<rect x="1173.82" y="727.14" width="18.10" height="4.7" fill="#d09060"/>
<rect x="1354.78" y="733.71" width="18.10" height="4.7" fill="#e2202a"/>
</g>
<rect x="140.8" y="248.7" width="73.5" height="16.6" rx="2" fill="#fff" stroke="#8c8c8c" stroke-width="1"/>
<text x="144.3" y="260.7" font-size="10.6" fill="#4a4a4a" textLength="66.2" lengthAdjust="spacingAndGlyphs">Refseq Genes</text>
<rect x="140.8" y="289.0" width="91.3" height="17.0" rx="2" fill="#fff" stroke="#8c8c8c" stroke-width="1"/>
<text x="144.3" y="301.2" font-size="10.6" fill="#4a4a4a" textLength="84.0" lengthAdjust="spacingAndGlyphs">Proband variants</text>
<rect x="140.6" y="334.6" width="81.4" height="17.0" rx="2" fill="#fff" stroke="#8c8c8c" stroke-width="1"/>
<text x="144.1" y="346.8" font-size="10.6" fill="#4a4a4a" textLength="74.1" lengthAdjust="spacingAndGlyphs">Assay hotspots</text>
<rect x="140.6" y="375.9" width="106.7" height="17.1" rx="2" fill="#fff" stroke="#8c8c8c" stroke-width="1"/>
<text x="144.1" y="388.1" font-size="10.6" fill="#4a4a4a" textLength="99.4" lengthAdjust="spacingAndGlyphs">Low Quality Regions</text>
<rect x="140.6" y="406.3" width="78.1" height="16.8" rx="2" fill="#fff" stroke="#8c8c8c" stroke-width="1"/>
<text x="144.1" y="418.4" font-size="10.6" fill="#4a4a4a" textLength="70.8" lengthAdjust="spacingAndGlyphs">Target regions</text>
<rect x="140.6" y="437.9" width="58.1" height="17.1" rx="2" fill="#fff" stroke="#8c8c8c" stroke-width="1"/>
<text x="144.1" y="450.1" font-size="10.6" fill="#4a4a4a" textLength="50.8" lengthAdjust="spacingAndGlyphs">Amplicons</text>
<rect x="140.8" y="479.1" width="56.3" height="16.7" rx="2" fill="#fff" stroke="#8c8c8c" stroke-width="1"/>
<text x="144.3" y="491.2" font-size="10.6" fill="#4a4a4a" textLength="49.0" lengthAdjust="spacingAndGlyphs">Alignment</text>
<path d="M1555,216.5H1560A5,5 0 0 1 1565,221.5V232A5,5 0 0 1 1560,237H1555Z" fill="#c8c8c8"/>
<path d="M1555,241.7H1560A5,5 0 0 1 1565,246.7V272.5A5,5 0 0 1 1560,277.5H1555Z" fill="#c8c8c8"/>
<path d="M1555,282.2H1560A5,5 0 0 1 1565,287.2V318A5,5 0 0 1 1560,323H1555Z" fill="#c8c8c8"/>
<path d="M1555,327.5H1560A5,5 0 0 1 1565,332.5V358.7A5,5 0 0 1 1560,363.7H1555Z" fill="#c8c8c8"/>
<path d="M1555,368.8H1560A5,5 0 0 1 1565,373.8V389.6A5,5 0 0 1 1560,394.6H1555Z" fill="#c8c8c8"/>
<path d="M1555,399H1560A5,5 0 0 1 1565,404V421A5,5 0 0 1 1560,426H1555Z" fill="#c8c8c8"/>
<path d="M1555,431H1560A5,5 0 0 1 1565,436V462.1A5,5 0 0 1 1560,467.1H1555Z" fill="#c8c8c8"/>
<path d="M1555,471.9H1560A5,5 0 0 1 1565,476.9V732.8A5,5 0 0 1 1560,737.8H1555Z" fill="#c8c8c8"/>
<rect x="1546" y="328" width="5.5" height="15" rx="2.7" fill="#fff" stroke="#d8d8d8" stroke-width="0.9"/>
<rect x="1546" y="472.4" width="5.5" height="8" rx="2.7" fill="#fff" stroke="#d8d8d8" stroke-width="0.9"/>
<use href="#gear" x="1577.1" y="226.79999999999998"/>
<use href="#gear" x="1577.1" y="251.7"/>
<use href="#gear" x="1577.1" y="292.3"/>
<use href="#gear" x="1577.1" y="337.1"/>
<use href="#gear" x="1577.1" y="379.1"/>
<use href="#gear" x="1577.1" y="409.3"/>
<use href="#gear" x="1577.1" y="441.5"/>
<use href="#gear" x="1577.1" y="482.1"/>
</svg></body></html>
